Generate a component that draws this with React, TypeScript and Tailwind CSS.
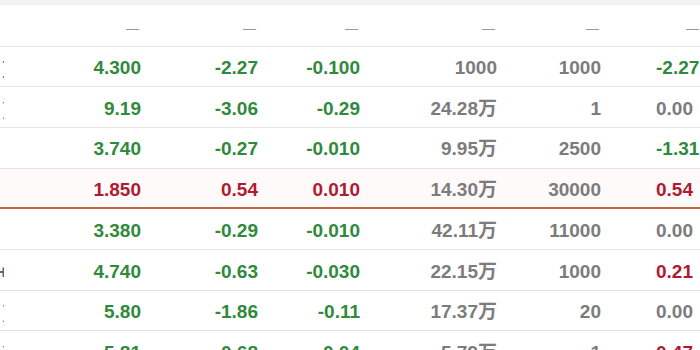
import React from 'react';

type Cell = { v: string; c: 'g' | 'r' | 'n' };

const rows: { edge: string; cells: Cell[]; mark?: boolean }[] = [
  { edge: ']', cells: [{ v: '4.300', c: 'g' }, { v: '-2.27', c: 'g' }, { v: '-0.100', c: 'g' }, { v: '1000', c: 'n' }, { v: '1000', c: 'n' }, { v: '-2.27', c: 'g' }] },
  { edge: ')', cells: [{ v: '9.19', c: 'g' }, { v: '-3.06', c: 'g' }, { v: '-0.29', c: 'g' }, { v: '24.28万', c: 'n' }, { v: '1', c: 'n' }, { v: '0.00', c: 'n' }] },
  { edge: '', cells: [{ v: '3.740', c: 'g' }, { v: '-0.27', c: 'g' }, { v: '-0.010', c: 'g' }, { v: '9.95万', c: 'n' }, { v: '2500', c: 'n' }, { v: '-1.31', c: 'g' }] },
  { edge: '', mark: true, cells: [{ v: '1.850', c: 'r' }, { v: '0.54', c: 'r' }, { v: '0.010', c: 'r' }, { v: '14.30万', c: 'n' }, { v: '30000', c: 'n' }, { v: '0.54', c: 'r' }] },
  { edge: '', cells: [{ v: '3.380', c: 'g' }, { v: '-0.29', c: 'g' }, { v: '-0.010', c: 'g' }, { v: '42.11万', c: 'n' }, { v: '11000', c: 'n' }, { v: '0.00', c: 'n' }] },
  { edge: '+', cells: [{ v: '4.740', c: 'g' }, { v: '-0.63', c: 'g' }, { v: '-0.030', c: 'g' }, { v: '22.15万', c: 'n' }, { v: '1000', c: 'n' }, { v: '0.21', c: 'r' }] },
  { edge: ')', cells: [{ v: '5.80', c: 'g' }, { v: '-1.86', c: 'g' }, { v: '-0.11', c: 'g' }, { v: '17.37万', c: 'n' }, { v: '20', c: 'n' }, { v: '0.00', c: 'n' }] },
  { edge: ')', cells: [{ v: '5.81', c: 'g' }, { v: '-0.68', c: 'g' }, { v: '-0.04', c: 'g' }, { v: '5.79万', c: 'n' }, { v: '1', c: 'n' }, { v: '0.47', c: 'r' }] },
];

const colour = (c: Cell['c']) =>
  c === 'g' ? 'text-[#2f8a3b]' : c === 'r' ? 'text-[#b01a33]' : 'text-[#7c7c7c]';

// column grid: cut-off name sliver, then six numeric columns
const grid = 'grid grid-cols-[4px_137px_117px_102px_137px_104px_99px] items-center';

const App: React.FC = () => {
  return (
    <div
      className="w-[700px] h-[350px] overflow-hidden bg-white"
      style={{ fontFamily: '"Liberation Sans", "Noto Sans CJK SC", sans-serif' }}
    >
      <div className="h-[5px] bg-[#f3f3f3]" />

      {/* Header: dashes only */}
      <div className={`${grid} h-[41.5px] border-b border-[#e3e3e3] text-[13px] text-[#999]`}>
        <div />
        {[0, 1, 2, 3, 4].map(i => (
          <div key={i} className="text-right pr-[2px] pt-[6px]">—</div>
        ))}
        <div className="flex justify-end pr-[1px] pt-[6px]">
          <span>—</span>
        </div>
      </div>

      {rows.map((row, i) => (
        <div
          key={i}
          className={`${grid} h-[40.7px] text-[19px] font-bold ${row.mark ? 'border-b-2 border-[#c2643d] bg-[#fffafa]' : 'border-b border-[#e3e3e3]'}`}
        >
          <div className="flex justify-end overflow-hidden text-[#666] pt-[4px]">
            <span className="shrink-0 -mr-[5px]">{row.edge}</span>
          </div>
          {row.cells.slice(0, 5).map((cell, j) => (
            <div key={j} className={`text-right pt-[4px] ${colour(cell.c)}`}>
              {cell.v}
            </div>
          ))}
          <div className={`pl-[55px] pt-[4px] whitespace-nowrap ${colour(row.cells[5].c)}`}>
            {row.cells[5].v}
          </div>
        </div>
      ))}
    </div>
  );
};

export default App;
